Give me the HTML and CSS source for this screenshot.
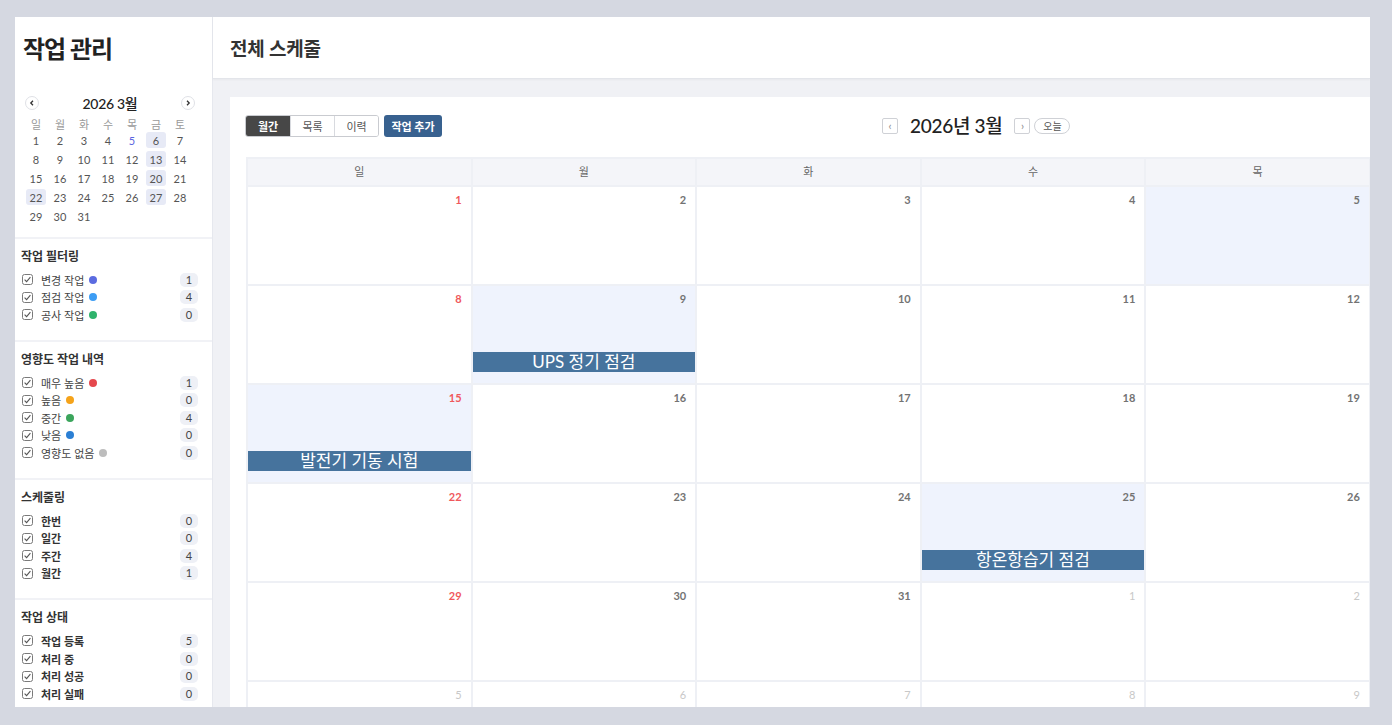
FILE: index.html
```html
<!DOCTYPE html>
<html lang="ko">
<head>
    <meta charset="UTF-8">
    <meta name="viewport" content="width=device-width, initial-scale=1.0">
    <title>작업 관리</title>
    <link rel="stylesheet" href="styles.css">
</head>
<body>
    <div class="app">
        <aside class="sidebar">
            <div class="sidebar-title">작업 관리</div>

            <div class="mini-cal">
                <div class="mini-nav">
                    <button class="mini-arrow"><svg width="6" height="6" viewBox="0 0 6 6"><path d="M4 0.8 L1.8 3 L4 5.2" fill="none" stroke="#333" stroke-width="1.3"/></svg></button>
                    <span class="mini-title">2026 3월</span>
                    <button class="mini-arrow"><svg width="6" height="6" viewBox="0 0 6 6"><path d="M2 0.8 L4.2 3 L2 5.2" fill="none" stroke="#333" stroke-width="1.3"/></svg></button>
                </div>
                <div class="mini-grid mini-week">
                    <span>일</span><span>월</span><span>화</span><span>수</span><span>목</span><span>금</span><span>토</span>
                </div>
                <div class="mini-grid mini-days">
                    <span>1</span><span>2</span><span>3</span><span>4</span><span class="today">5</span><span class="mark">6</span><span>7</span>
                    <span>8</span><span>9</span><span>10</span><span>11</span><span>12</span><span class="mark">13</span><span>14</span>
                    <span>15</span><span>16</span><span>17</span><span>18</span><span>19</span><span class="mark">20</span><span>21</span>
                    <span class="mark">22</span><span>23</span><span>24</span><span>25</span><span>26</span><span class="mark">27</span><span>28</span>
                    <span>29</span><span>30</span><span>31</span>
                </div>
            </div>

            <div class="filter">
                <div class="filter-title">작업 필터링</div>
                <label class="filter-item"><svg class="check" viewBox="0 0 11 11"><rect x="0.5" y="0.5" width="10" height="10" rx="2"/><path d="M2.6 5.6 L4.6 7.6 L8.4 3.2"/></svg><span>변경 작업</span><i class="dot" style="background:#5b6be0"></i><em class="count">1</em></label>
                <label class="filter-item"><svg class="check" viewBox="0 0 11 11"><rect x="0.5" y="0.5" width="10" height="10" rx="2"/><path d="M2.6 5.6 L4.6 7.6 L8.4 3.2"/></svg><span>점검 작업</span><i class="dot" style="background:#3d9df4"></i><em class="count">4</em></label>
                <label class="filter-item"><svg class="check" viewBox="0 0 11 11"><rect x="0.5" y="0.5" width="10" height="10" rx="2"/><path d="M2.6 5.6 L4.6 7.6 L8.4 3.2"/></svg><span>공사 작업</span><i class="dot" style="background:#2fb36c"></i><em class="count">0</em></label>
            </div>

            <div class="filter">
                <div class="filter-title">영향도 작업 내역</div>
                <label class="filter-item"><svg class="check" viewBox="0 0 11 11"><rect x="0.5" y="0.5" width="10" height="10" rx="2"/><path d="M2.6 5.6 L4.6 7.6 L8.4 3.2"/></svg><span>매우 높음</span><i class="dot" style="background:#e5484d"></i><em class="count">1</em></label>
                <label class="filter-item"><svg class="check" viewBox="0 0 11 11"><rect x="0.5" y="0.5" width="10" height="10" rx="2"/><path d="M2.6 5.6 L4.6 7.6 L8.4 3.2"/></svg><span>높음</span><i class="dot" style="background:#f5a31a"></i><em class="count">0</em></label>
                <label class="filter-item"><svg class="check" viewBox="0 0 11 11"><rect x="0.5" y="0.5" width="10" height="10" rx="2"/><path d="M2.6 5.6 L4.6 7.6 L8.4 3.2"/></svg><span>중간</span><i class="dot" style="background:#3ba55c"></i><em class="count">4</em></label>
                <label class="filter-item"><svg class="check" viewBox="0 0 11 11"><rect x="0.5" y="0.5" width="10" height="10" rx="2"/><path d="M2.6 5.6 L4.6 7.6 L8.4 3.2"/></svg><span>낮음</span><i class="dot" style="background:#2b7fd4"></i><em class="count">0</em></label>
                <label class="filter-item"><svg class="check" viewBox="0 0 11 11"><rect x="0.5" y="0.5" width="10" height="10" rx="2"/><path d="M2.6 5.6 L4.6 7.6 L8.4 3.2"/></svg><span>영향도 없음</span><i class="dot" style="background:#bdbdbd"></i><em class="count">0</em></label>
            </div>

            <div class="filter strong">
                <div class="filter-title">스케줄링</div>
                <label class="filter-item"><svg class="check" viewBox="0 0 11 11"><rect x="0.5" y="0.5" width="10" height="10" rx="2"/><path d="M2.6 5.6 L4.6 7.6 L8.4 3.2"/></svg><span>한번</span><em class="count">0</em></label>
                <label class="filter-item"><svg class="check" viewBox="0 0 11 11"><rect x="0.5" y="0.5" width="10" height="10" rx="2"/><path d="M2.6 5.6 L4.6 7.6 L8.4 3.2"/></svg><span>일간</span><em class="count">0</em></label>
                <label class="filter-item"><svg class="check" viewBox="0 0 11 11"><rect x="0.5" y="0.5" width="10" height="10" rx="2"/><path d="M2.6 5.6 L4.6 7.6 L8.4 3.2"/></svg><span>주간</span><em class="count">4</em></label>
                <label class="filter-item"><svg class="check" viewBox="0 0 11 11"><rect x="0.5" y="0.5" width="10" height="10" rx="2"/><path d="M2.6 5.6 L4.6 7.6 L8.4 3.2"/></svg><span>월간</span><em class="count">1</em></label>
            </div>

            <div class="filter strong">
                <div class="filter-title">작업 상태</div>
                <label class="filter-item"><svg class="check" viewBox="0 0 11 11"><rect x="0.5" y="0.5" width="10" height="10" rx="2"/><path d="M2.6 5.6 L4.6 7.6 L8.4 3.2"/></svg><span>작업 등록</span><em class="count">5</em></label>
                <label class="filter-item"><svg class="check" viewBox="0 0 11 11"><rect x="0.5" y="0.5" width="10" height="10" rx="2"/><path d="M2.6 5.6 L4.6 7.6 L8.4 3.2"/></svg><span>처리 중</span><em class="count">0</em></label>
                <label class="filter-item"><svg class="check" viewBox="0 0 11 11"><rect x="0.5" y="0.5" width="10" height="10" rx="2"/><path d="M2.6 5.6 L4.6 7.6 L8.4 3.2"/></svg><span>처리 성공</span><em class="count">0</em></label>
                <label class="filter-item"><svg class="check" viewBox="0 0 11 11"><rect x="0.5" y="0.5" width="10" height="10" rx="2"/><path d="M2.6 5.6 L4.6 7.6 L8.4 3.2"/></svg><span>처리 실패</span><em class="count">0</em></label>
            </div>
        </aside>

        <main class="main">
            <header class="page-header">
                <h1>전체 스케줄</h1>
            </header>

            <div class="content">
                <div class="card">
                    <div class="toolbar">
                        <div class="view-tabs">
                            <button class="view-tab active">월간</button>
                            <button class="view-tab">목록</button>
                            <button class="view-tab">이력</button>
                        </div>
                        <button class="add-button">작업 추가</button>

                        <div class="month-nav">
                            <button class="month-arrow">‹</button>
                            <span class="month-title">2026년 3월</span>
                            <button class="month-arrow">›</button>
                            <button class="today-button">오늘</button>
                        </div>
                    </div>

                    <div class="calendar">
                        <div class="cal-head">일</div>
                        <div class="cal-head">월</div>
                        <div class="cal-head">화</div>
                        <div class="cal-head">수</div>
                        <div class="cal-head">목</div>
                        <div class="cal-head">금</div>
                        <div class="cal-head">토</div>

                        <div class="cal-day sun"><span class="num">1</span></div>
                        <div class="cal-day"><span class="num">2</span></div>
                        <div class="cal-day"><span class="num">3</span></div>
                        <div class="cal-day"><span class="num">4</span></div>
                        <div class="cal-day is-today"><span class="num">5</span></div>
                        <div class="cal-day"><span class="num">6</span></div>
                        <div class="cal-day sat"><span class="num">7</span></div>

                        <div class="cal-day sun"><span class="num">8</span></div>
                        <div class="cal-day has-event"><span class="num">9</span><div class="event">UPS 정기 점검</div></div>
                        <div class="cal-day"><span class="num">10</span></div>
                        <div class="cal-day"><span class="num">11</span></div>
                        <div class="cal-day"><span class="num">12</span></div>
                        <div class="cal-day"><span class="num">13</span></div>
                        <div class="cal-day sat"><span class="num">14</span></div>

                        <div class="cal-day sun has-event"><span class="num">15</span><div class="event">발전기 기동 시험</div></div>
                        <div class="cal-day"><span class="num">16</span></div>
                        <div class="cal-day"><span class="num">17</span></div>
                        <div class="cal-day"><span class="num">18</span></div>
                        <div class="cal-day"><span class="num">19</span></div>
                        <div class="cal-day"><span class="num">20</span></div>
                        <div class="cal-day sat"><span class="num">21</span></div>

                        <div class="cal-day sun"><span class="num">22</span></div>
                        <div class="cal-day"><span class="num">23</span></div>
                        <div class="cal-day"><span class="num">24</span></div>
                        <div class="cal-day has-event"><span class="num">25</span><div class="event">항온항습기 점검</div></div>
                        <div class="cal-day"><span class="num">26</span></div>
                        <div class="cal-day"><span class="num">27</span></div>
                        <div class="cal-day sat"><span class="num">28</span></div>

                        <div class="cal-day sun"><span class="num">29</span></div>
                        <div class="cal-day"><span class="num">30</span></div>
                        <div class="cal-day"><span class="num">31</span></div>
                        <div class="cal-day other"><span class="num">1</span></div>
                        <div class="cal-day other"><span class="num">2</span></div>
                        <div class="cal-day other"><span class="num">3</span></div>
                        <div class="cal-day other"><span class="num">4</span></div>

                        <div class="cal-day other"><span class="num">5</span></div>
                        <div class="cal-day other"><span class="num">6</span></div>
                        <div class="cal-day other"><span class="num">7</span></div>
                        <div class="cal-day other"><span class="num">8</span></div>
                        <div class="cal-day other"><span class="num">9</span></div>
                        <div class="cal-day other"><span class="num">10</span></div>
                        <div class="cal-day other"><span class="num">11</span></div>
                    </div>
                </div>
            </div>
        </main>
    </div>
</body>
</html>
```

FILE: styles.css
```css
* {
    box-sizing: border-box;
}

body {
    margin: 0;
    padding: 17px 0 0 15px;
    height: 725px;
    overflow: hidden;
    background: #d5d8e1;
    font-family: Lato, "Noto Sans CJK KR", sans-serif;
    color: #333;
}

button {
    font-family: inherit;
    cursor: pointer;
}

.app {
    display: flex;
    width: 1355px;
    height: 690px;
    overflow: hidden;
    background: #f0f1f5;
}

/* sidebar */

.sidebar {
    flex-shrink: 0;
    width: 198px;
    background: #ffffff;
    border-right: 1px solid #e6e8ee;
}

.sidebar-title {
    padding: 18px 0 0 8px;
    font-size: 24px;
    font-weight: 700;
    line-height: 28px;
    color: #222;
    letter-spacing: -1px;
}

.mini-cal {
    margin-top: 33px;
    padding: 0 20px 11.5px 9px;
}

.mini-nav {
    display: flex;
    justify-content: space-between;
    align-items: center;
    height: 14px;
    margin-right: -3px;
    padding-left: 1px;
}

.mini-arrow {
    display: flex;
    align-items: center;
    justify-content: center;
    width: 14px;
    height: 14px;
    padding: 0;
    border: 1px solid #dfe1e6;
    border-radius: 50%;
    background: #ffffff;
}

.mini-title {
    font-size: 14px;
    font-weight: 500;
    color: #222;
    letter-spacing: -0.3px;
}

.mini-grid {
    display: grid;
    grid-template-columns: repeat(7, 24px);
    text-align: center;
    font-size: 11px;
}

.mini-week {
    margin-top: 8px;
    line-height: 14px;
    color: #9a9a9a;
}

.mini-days {
    grid-auto-rows: 19px;
    margin-top: -1.5px;
    color: #555;
}

.mini-days span {
    display: flex;
    align-items: center;
    justify-content: center;
}

.mini-days .today {
    color: #5b66e0;
}

.mini-days .mark {
    width: 20px;
    height: 16px;
    margin: 1.5px 2px;
    border-radius: 3px;
    background: #e7eaf6;
}

.filter {
    padding: 9px 14px 16px 6px;
    border-top: 2px solid #f1f2f6;
}

.filter-title {
    font-size: 12px;
    font-weight: 700;
    line-height: 18px;
    color: #333;
    margin-bottom: 5px;
}

.filter-item {
    display: flex;
    align-items: center;
    height: 17.6px;
    padding-left: 1px;
    font-size: 11px;
    color: #444;
}

.strong .filter-item {
    font-weight: 700;
    color: #333;
}

.check {
    width: 11px;
    height: 11px;
    margin-right: 8px;
    fill: #ffffff;
    stroke: #7a7a7a;
    stroke-width: 1;
}

.check path {
    fill: none;
    stroke: #555;
    stroke-width: 1.1;
}

.dot {
    width: 8px;
    height: 8px;
    margin-left: 5px;
    border-radius: 50%;
}

.count {
    margin-left: auto;
    min-width: 18px;
    height: 14px;
    line-height: 14px;
    border-radius: 5px;
    background: #eef0f6;
    font-style: normal;
    font-weight: 400;
    font-size: 11px;
    color: #444;
    text-align: center;
}

/* main area */

.main {
    display: flex;
    flex-direction: column;
    flex: 1;
    min-width: 0;
}

.page-header {
    display: flex;
    align-items: center;
    flex-shrink: 0;
    height: 62px;
    padding-left: 17px;
    background: #ffffff;
    border-bottom: 1px solid #e3e5ea;
    box-shadow: 0 1px 2px rgba(0, 0, 0, 0.04);
}

.page-header h1 {
    margin: 0;
    font-size: 19px;
    font-weight: 700;
    color: #333;
    letter-spacing: -0.2px;
}

.content {
    flex: 1;
    padding: 18px 0 0 17px;
    overflow: hidden;
}

.card {
    width: 1606px;
    height: 100%;
    padding: 17px 16px;
    background: #ffffff;
}

.toolbar {
    display: flex;
    align-items: center;
    height: 24px;
    margin-bottom: 19px;
}

.view-tabs {
    display: flex;
    margin-left: -1px;
    border: 1px solid #c9cbd0;
    border-radius: 3px;
    overflow: hidden;
}

.view-tab {
    width: 44px;
    height: 20px;
    padding: 0;
    border: none;
    border-left: 1px solid #d8dadf;
    background: #ffffff;
    font-size: 11px;
    color: #555;
}

.view-tab:first-child {
    border-left: none;
}

.view-tab.active {
    background: #474747;
    color: #ffffff;
    font-weight: 700;
}

.add-button {
    width: 58px;
    height: 22px;
    margin-left: 5px;
    padding: 0;
    border: none;
    border-radius: 3px;
    background: #38618f;
    color: #ffffff;
    font-size: 11px;
    font-weight: 700;
}

.month-nav {
    display: flex;
    align-items: center;
    margin-left: 440px;
}

.month-arrow {
    width: 16px;
    height: 16px;
    padding: 0;
    border: 1px solid #cfd1d6;
    border-radius: 2px;
    background: #ffffff;
    color: #888;
    font-size: 11px;
    line-height: 12px;
}

.month-title {
    margin: 0 12px;
    font-size: 19px;
    font-weight: 500;
    line-height: 24px;
    color: #222;
    letter-spacing: -0.3px;
}

.month-title + .month-arrow {
    margin-right: 4px;
}

.today-button {
    width: 36px;
    height: 16px;
    padding: 0;
    border: 1px solid #cfd1d6;
    border-radius: 9px;
    background: #ffffff;
    font-size: 10px;
    color: #555;
    line-height: 13px;
}

/* month grid */

.calendar {
    display: grid;
    grid-template-columns: repeat(7, 1fr);
    grid-template-rows: 26px;
    grid-auto-rows: 97px;
    gap: 2px;
    width: 1574px;
    padding: 2px;
    background: #eef0f5;
}

.cal-head {
    background: #f4f5f9;
    font-size: 11px;
    line-height: 26px;
    color: #666;
    text-align: center;
}

.cal-day {
    display: flex;
    flex-direction: column;
    background: #ffffff;
}

.cal-day .num {
    padding: 6px 9px 0 0;
    font-size: 11px;
    font-weight: 700;
    line-height: 14px;
    color: #737373;
    text-align: right;
}

.cal-day.sun .num {
    color: #f0585c;
}

.cal-day.other .num {
    color: #c8c8c8;
    font-weight: 400;
}

.cal-day.is-today,
.cal-day.has-event {
    background: #eff3fd;
}

.event {
    margin-top: auto;
    margin-bottom: 11px;
    height: 20px;
    background: #46739d;
    color: #ffffff;
    font-size: 17px;
    line-height: 20px;
    text-align: center;
    white-space: nowrap;
    overflow: hidden;
}
```
